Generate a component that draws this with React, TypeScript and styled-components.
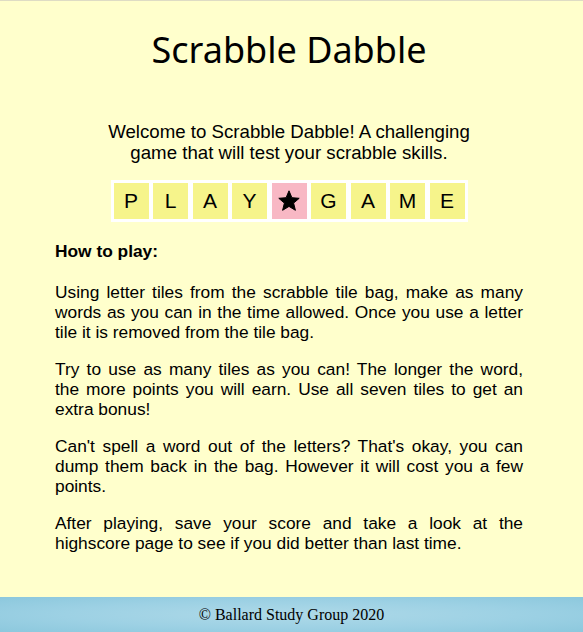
import React from 'react';
import styled, { createGlobalStyle } from 'styled-components';

const GlobalStyle = createGlobalStyle`
  html, body {
    margin: 0;
    padding: 0;
    background: #ffffcc;
  }
  body {
    font-family: 'Liberation Sans', Arial, sans-serif;
    color: #000;
  }
`;

const Page = styled.div`
  min-height: 100vh;
  box-sizing: border-box;
  border-top: 1px solid #dedcc4;
  display: flex;
  flex-direction: column;
  align-items: center;
  padding-right: 5px;
  padding-top: 27px;
`;

const Title = styled.h1`
  margin: 0;
  font-family: 'Noto Sans', 'DejaVu Sans', sans-serif;
  font-weight: 400;
  font-size: 36px;
  line-height: 44px;
  text-align: center;
`;

const Welcome = styled.p`
  margin: 48.5px 0 0;
  width: 380px;
  font-size: 14pt;
  line-height: 21px;
  text-align: center;
`;

const TileRow = styled.div`
  margin-top: 17px;
  display: flex;
  gap: 4.5px;
  padding: 3px;
  background: #ffffff;
`;

const Tile = styled.div<{ $special?: boolean }>`
  width: 35px;
  height: 36px;
  display: flex;
  align-items: center;
  justify-content: center;
  background: ${({ $special }) => ($special ? '#f8b8c4' : '#f6f48b')};
  font-size: 21px;
  color: #000;
`;

const Rules = styled.section`
  width: 468px;
  margin-top: 19px;
`;

const RulesHeading = styled.h3`
  margin: 0;
  font-size: 13pt;
  line-height: 20px;
  font-weight: 700;
`;

const Rule = styled.p`
  margin: 1em 0 0;
  font-size: 13pt;
  line-height: 20px;
  text-align: justify;
  &:first-of-type {
    margin-top: 21px;
  }
`;

const Footer = styled.footer`
  margin-top: auto;
  align-self: stretch;
  margin-right: -5px;
  height: 35px;
  display: flex;
  align-items: center;
  justify-content: center;
  background: radial-gradient(ellipse at center, #aed9e8 0%, #9dd1e4 55%, #8cc8dd 100%);
  font-family: 'Liberation Serif', 'Times New Roman', serif;
  font-size: 16px;
  color: #000;
`;

const Star = () => (
  <svg width="24" height="24" viewBox="0 0 24 24" aria-hidden="true">
    <path
      d="M12 1.8l2.9 6.9 7.3.6-5.6 4.8 1.8 7.2L12 17.4l-6.4 3.9 1.8-7.2-5.6-4.8 7.3-.6z"
      fill="#000"
      strokeLinejoin="round"
      stroke="#000"
      strokeWidth="1"
    />
  </svg>
);

const letters = ['P', 'L', 'A', 'Y', '*', 'G', 'A', 'M', 'E'];

const rules = [
  'Using letter tiles from the scrabble tile bag, make as many words as you can in the time allowed. Once you use a letter tile it is removed from the tile bag.',
  'Try to use as many tiles as you can! The longer the word, the more points you will earn. Use all seven tiles to get an extra bonus!',
  "Can't spell a word out of the letters? That's okay, you can dump them back in the bag. However it will cost you a few points.",
  'After playing, save your score and take a look at the highscore page to see if you did better than last time.',
];

export default function App() {
  return (
    <>
      <GlobalStyle />
      <Page>
        <Title>Scrabble Dabble</Title>
        <Welcome>
          Welcome to Scrabble Dabble! A challenging game that will test your scrabble skills.
        </Welcome>
        <TileRow>
          {letters.map((l, i) =>
            l === '*' ? (
              <Tile key={i} $special>
                <Star />
              </Tile>
            ) : (
              <Tile key={i}>{l}</Tile>
            )
          )}
        </TileRow>
        <Rules>
          <RulesHeading>How to play:</RulesHeading>
          {rules.map((r, i) => (
            <Rule key={i}>{r}</Rule>
          ))}
        </Rules>
        <Footer>© Ballard Study Group 2020</Footer>
      </Page>
    </>
  );
}
